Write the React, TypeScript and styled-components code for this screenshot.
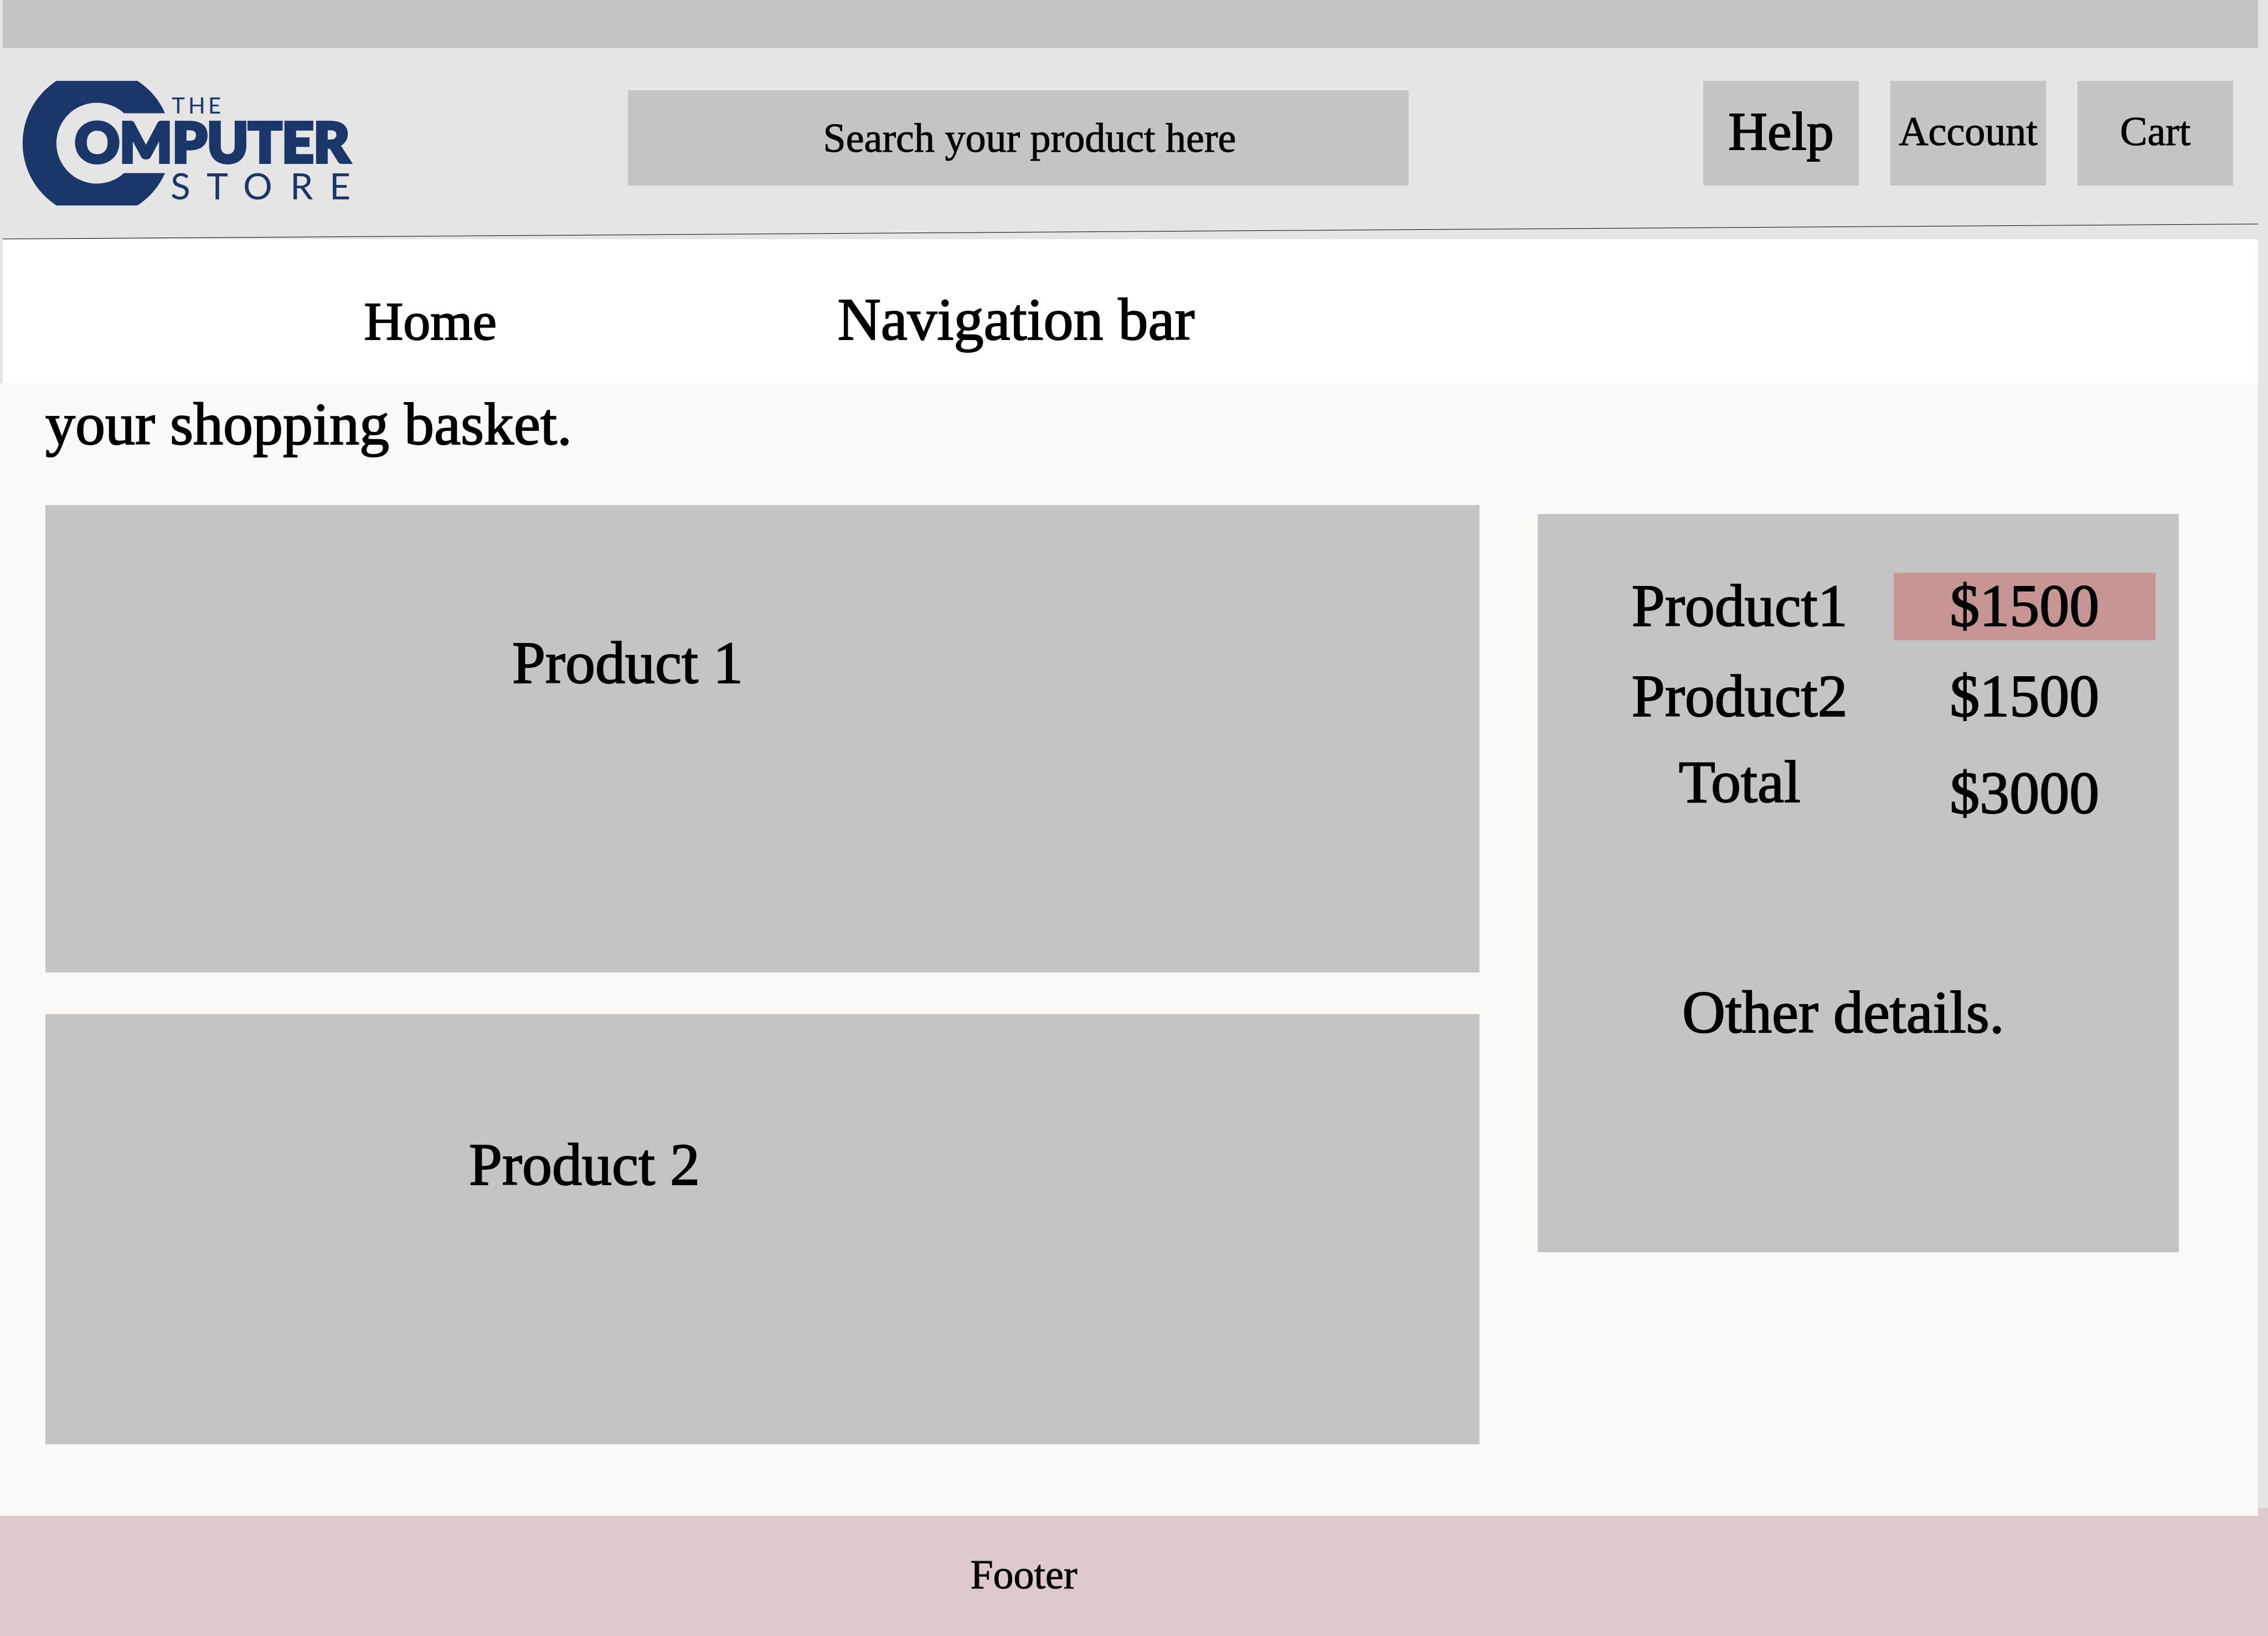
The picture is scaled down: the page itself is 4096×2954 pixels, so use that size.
import React from "react";
import styled, { createGlobalStyle } from "styled-components";

const color = {
  page: "#e5e5e5",
  block: "#c4c4c4",
  main: "#faf9f7",
  nav: "#ffffff",
  highlight: "#c69594",
  footer: "#decaca",
  brand: "#1b3668",
  text: "#000000",
};

const GlobalStyle = createGlobalStyle`
  *, *::before, *::after { box-sizing: border-box; }
  body {
    margin: 0;
    background: ${color.page};
    color: ${color.text};
    font-family: "Liberation Serif", "Times New Roman", serif;
    font-size: 108px;
    line-height: 120px;
    -webkit-text-stroke: 2px currentColor;
  }
`;

const Page = styled.div`
  display: flex;
  flex-direction: column;
  min-height: 100vh;
`;

const Sheet = styled.div`
  position: relative;
  margin-right: 18px;
`;

const TopBar = styled.div`
  height: 87px;
  margin-left: 5px;
  background: ${color.block};
`;

const Header = styled.header`
  position: relative;
  display: grid;
  grid-template-columns: 1093fr 1410fr 1489fr;
  align-items: start;
  height: 345px;
  margin-left: 5px;
  padding: 59px 45px 0 36px;
`;

const HomeLink = styled.a`
  display: block;
  width: 620px;
  height: 240px;
`;

const LogoArt = styled.svg`
  display: block;
  fill: ${color.brand};
  font-family: Lato, sans-serif;
  -webkit-text-stroke: 0;
`;

const Search = styled.input`
  width: 100%;
  height: 172px;
  margin: 17px 0 0;
  padding: 0 0 0 66px;
  border: 0;
  border-radius: 0;
  background: ${color.block};
  color: ${color.text};
  font-family: inherit;
  font-size: 74px;
  text-align: center;
  -webkit-text-stroke: 1px currentColor;

  &::placeholder {
    color: ${color.text};
    opacity: 1;
  }
`;

const Actions = styled.div`
  display: flex;
  justify-content: flex-end;
  gap: 57px;
`;

const ActionButton = styled.button<{ $large?: boolean }>`
  width: 281px;
  height: 189px;
  padding: 0 0 8px;
  border: 0;
  background: ${color.block};
  color: ${color.text};
  font-family: inherit;
  font-size: ${(p) => (p.$large ? 98 : 74)}px;
  line-height: 120px;
  -webkit-text-stroke: ${(p) => (p.$large ? 2 : 1)}px currentColor;
`;

const Rule = styled.svg`
  position: absolute;
  left: 0;
  bottom: 0;
  width: 100%;
  height: 28px;
  pointer-events: none;
`;

const Nav = styled.nav`
  display: flex;
  align-items: baseline;
  gap: 18%;
  height: 260px;
  margin-left: 5px;
  padding: 85px 0 0 16%;
  background: ${color.nav};
`;

const NavLink = styled.a<{ $compact?: boolean }>`
  color: inherit;
  font-size: ${(p) => (p.$compact ? 98 : 108)}px;
  text-decoration: none;
  white-space: nowrap;
`;

const Main = styled.main`
  padding: 14px 143px 129px 82px;
  background: ${color.main};
`;

const Title = styled.h1`
  margin: 0 0 86px;
  font-size: inherit;
  font-weight: 400;
`;

const Columns = styled.div`
  display: grid;
  grid-template-columns: 2590fr 1158fr;
  column-gap: 105px;
  align-items: start;
`;

const Products = styled.div`
  display: grid;
  gap: 75px;
`;

const ProductCard = styled.article<{ $height: number; $top: number; $indent: number }>`
  min-height: ${(p) => p.$height}px;
  padding: ${(p) => p.$top}px 0 0 ${(p) => p.$indent}px;
  background: ${color.block};
`;

const ProductName = styled.h2`
  margin: 0;
  font-size: inherit;
  font-weight: 400;
`;

const Summary = styled.aside`
  min-height: 1333px;
  margin-top: 16px;
  padding: 65px 42px 0 87px;
  background: ${color.block};
`;

const PriceTable = styled.table`
  width: 100%;
  table-layout: fixed;
  border-spacing: 0 41px;
  font-size: inherit;
  line-height: inherit;
`;

const ItemCell = styled.th`
  width: 54%;
  height: 122px;
  padding: 0;
  font-weight: 400;
  text-align: center;
  vertical-align: top;
`;

const PriceCell = styled.td<{ $highlight?: boolean }>`
  height: 122px;
  padding: 0;
  background: ${(p) => (p.$highlight ? color.highlight : "transparent")};
  text-align: center;
  vertical-align: top;
`;

const TotalLabel = styled(ItemCell)`
  height: 124px;
  line-height: 104px;
`;

const TotalPrice = styled(PriceCell)`
  height: 124px;
  line-height: 104px;
  vertical-align: bottom;
`;

const Details = styled.p`
  margin: 243px 0 0;
  padding-left: 174px;
`;

const Footer = styled.footer`
  flex: 1;
  min-height: 231px;
  margin-top: -14px;
  padding: 78px 398px 0 0;
  background: ${color.footer};
  font-size: 74px;
  line-height: 84px;
  text-align: center;
  -webkit-text-stroke: 1px currentColor;
`;

function Logo() {
  return (
    <LogoArt width="620" height="240" viewBox="0 0 620 240" role="img" aria-label="The Computer Store">
      <path d="M61 0H207A134 134 0 0 1 257 58.5H183A73 73 0 1 0 183 166.5H257A134 134 0 0 1 207 225H61A134 134 0 0 1 61 0Z" />
      <text x="269 299 335" y="59" fontSize="40">THE</text>
      <text x="94" y="147" fontSize="100" fontWeight="900" stroke={color.brand} strokeWidth="6">OMPUTER</text>
      <text x="267 332 398 483 554" y="214" fontSize="66">STORE</text>
    </LogoArt>
  );
}

const products = [
  { name: "Product 1", height: 844, top: 225, indent: 843 },
  { name: "Product 2", height: 777, top: 212, indent: 765 },
];

const lines = [
  { item: "Product1", price: "$1500", highlight: true },
  { item: "Product2", price: "$1500", highlight: false },
];

export default function App() {
  return (
    <>
      <GlobalStyle />
      <Page>
        <Sheet>
          <TopBar />
          <Header>
            <HomeLink href="#"><Logo /></HomeLink>
            <Search type="search" aria-label="Search products" placeholder="Search your product here" />
            <Actions>
              <ActionButton type="button" $large>Help</ActionButton>
              <ActionButton type="button">Account</ActionButton>
              <ActionButton type="button">Cart</ActionButton>
            </Actions>
            <Rule viewBox="0 0 100 28" preserveAspectRatio="none" aria-hidden="true">
              <line x1="0" y1="27.5" x2="100" y2="0.5" stroke="#000" vectorEffect="non-scaling-stroke" />
            </Rule>
          </Header>
          <Nav>
            <NavLink href="#" $compact>Home</NavLink>
            <NavLink href="#">Navigation bar</NavLink>
          </Nav>
          <Main>
            <Title>your shopping basket.</Title>
            <Columns>
              <Products>
                {products.map((p) => (
                  <ProductCard key={p.name} $height={p.height} $top={p.top} $indent={p.indent}>
                    <ProductName>{p.name}</ProductName>
                  </ProductCard>
                ))}
              </Products>
              <Summary>
                <PriceTable>
                  <tbody>
                    {lines.map((l) => (
                      <tr key={l.item}>
                        <ItemCell scope="row">{l.item}</ItemCell>
                        <PriceCell $highlight={l.highlight}>{l.price}</PriceCell>
                      </tr>
                    ))}
                    <tr>
                      <TotalLabel scope="row">Total</TotalLabel>
                      <TotalPrice>$3000</TotalPrice>
                    </tr>
                  </tbody>
                </PriceTable>
                <Details>Other details.</Details>
              </Summary>
            </Columns>
          </Main>
        </Sheet>
        <Footer>Footer</Footer>
      </Page>
    </>
  );
}
